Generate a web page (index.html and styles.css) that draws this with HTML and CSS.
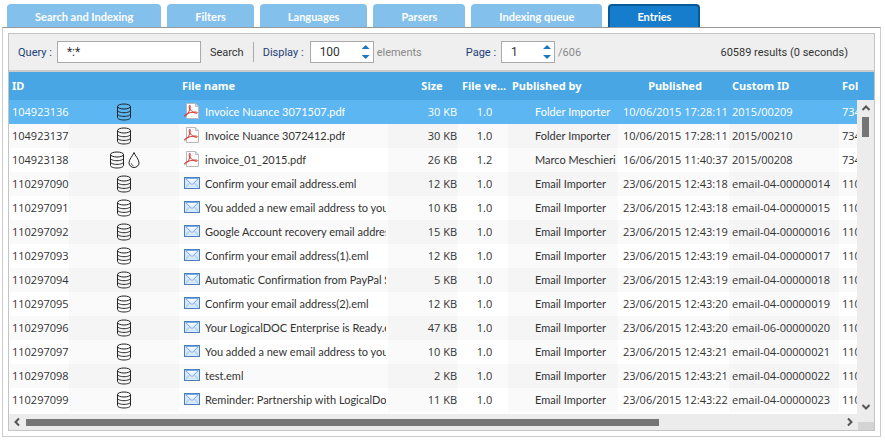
FILE: index.html
```
<!DOCTYPE html>
<html lang="en">
<head>
  <meta charset="UTF-8" />
  <title>Entries</title>
  <meta name="viewport" content="width=device-width, initial-scale=1.0" />
  <link rel="stylesheet" href="styles.css">
</head>
<body>

  <!-- shared icons -->
  <svg class="sprite" width="0" height="0" aria-hidden="true">
    <symbol id="db" viewBox="0 0 16 18">
      <path d="M1.500 3.500v11c0 1.400 2.800 2.500 6.500 2.500s6.500-1.100 6.500-2.500v-11" fill="none" stroke="currentColor" />
      <ellipse cx="8" cy="3.500" rx="6.500" ry="2.500" fill="none" stroke="currentColor" />
      <path d="M1.500 7.200c0 1.400 2.800 2.500 6.500 2.500s6.500-1.100 6.500-2.500M1.500 10.900c0 1.400 2.800 2.500 6.500 2.500s6.500-1.100 6.500-2.500" fill="none" stroke="currentColor" />
    </symbol>
    <symbol id="drop" viewBox="0 0 12 18">
      <path d="M6 1.500C4.700 5 1 8.300 1 11.800a5 4.700 0 0 0 10 0C11 8.300 7.300 5 6 1.500z" fill="none" stroke="currentColor" />
      <path d="M3.200 12.200c.2 1.300 1 2.200 2.200 2.500" fill="none" stroke="currentColor" stroke-width=".8" />
    </symbol>
    <symbol id="pdf" viewBox="0 0 16 16">
      <path d="M2.500.5h9l3 3v12h-12z" fill="#fdfdfd" stroke="#b9b9b9" />
      <path d="M11.500.5v3h3" fill="#e4e4e4" stroke="#b9b9b9" />
      <path d="M.8 13.200c1.600-.3 5.200-4.700 5.500-9.900.1-1.200-1.300-1.200-1.200.1.300 3.600 3.800 6.500 7.400 6.900 1.100.1 1.200-1 .1-1.200-3.200-.5-8.700.8-11.300 2.600-1 .7-1.300 1.600-.5 1.500z" fill="none" stroke="#d6322c" />
    </symbol>
    <symbol id="mail" viewBox="0 0 16 12">
      <rect x=".5" y=".5" width="15" height="11" fill="#d5e8fb" stroke="#4a80bd" />
      <path d="M1.500 10.500l4.500-5M14.500 10.500l-4.500-5" stroke="#9dc3ea" />
      <path d="M1.500 1.500L8 7.500l6.500-6z" fill="#eef6ff" stroke="#7eaadb" />
    </symbol>
    <symbol id="chevron" viewBox="0 0 10 10">
      <path d="M1.500 7L5 3.500 8.500 7" fill="none" stroke="#555" stroke-width="2" />
    </symbol>
  </svg>

  <nav class="tabs">
    <button class="tab">Search and Indexing</button>
    <button class="tab">Filters</button>
    <button class="tab">Languages</button>
    <button class="tab">Parsers</button>
    <button class="tab">Indexing queue</button>
    <button class="tab active">Entries</button>
  </nav>

  <main class="panel">
    <div class="entries">
      <form class="toolbar">
        <label for="query">Query :</label>
        <input id="query" class="query" type="text" value="*:*">
        <button type="button" class="search">Search</button>
        <label for="display">Display :</label>
        <span class="spinner">
          <input id="display" type="text" value="100">
          <span class="arrows">
            <button type="button" class="up" aria-label="More elements"></button>
            <button type="button" class="down" aria-label="Fewer elements"></button>
          </span>
        </span>
        <span class="unit">elements</span>
        <label for="page" class="page-label">Page :</label>
        <span class="spinner page">
          <input id="page" type="text" value="1">
          <span class="arrows">
            <button type="button" class="up" aria-label="Next page"></button>
            <button type="button" class="down" aria-label="Previous page"></button>
          </span>
        </span>
        <span class="unit">/606</span>
        <span class="results">60589 results (0 seconds)</span>
      </form>

      <div class="grid">
        <table>
          <colgroup>
            <col class="c-id"><col class="c-icons"><col class="c-name"><col class="c-size"><col class="c-ver">
            <col class="c-by"><col class="c-date"><col class="c-custom"><col class="c-folder">
          </colgroup>
          <thead>
            <tr>
              <th>ID</th>
              <th></th>
              <th>File name</th>
              <th class="size">Size</th>
              <th class="ver">File ve...</th>
              <th class="by">Published by</th>
              <th class="date">Published</th>
              <th>Custom ID</th>
              <th><div class="cut">Fol</div></th>
            </tr>
          </thead>
          <tbody id="rows"></tbody>
        </table>
        <div class="vscroll">
          <svg class="arrow"><use href="#chevron" /></svg>
          <div class="thumb"></div>
          <svg class="arrow flip"><use href="#chevron" /></svg>
        </div>
      </div>

      <div class="hscroll">
        <svg class="arrow left"><use href="#chevron" /></svg>
        <div class="track"><div class="thumb"></div></div>
        <svg class="arrow right"><use href="#chevron" /></svg>
        <div class="corner"></div>
      </div>
    </div>
  </main>

  <script>
    // id, file name, size, version, published by, published, custom id, folder
    const entries = [
      ['104923136', 'Invoice Nuance 3071507.pdf', '30 KB', '1.0', 'Folder Importer', '10/06/2015 17:28:11', '2015/00209', '734'],
      ['104923137', 'Invoice Nuance 3072412.pdf', '30 KB', '1.0', 'Folder Importer', '10/06/2015 17:28:11', '2015/00210', '734'],
      ['104923138', 'invoice_01_2015.pdf', '26 KB', '1.2', 'Marco Meschieri', '16/06/2015 11:40:37', '2015/00208', '734'],
      ['110297090', 'Confirm your email address.eml', '12 KB', '1.0', 'Email Importer', '23/06/2015 12:43:18', 'email-04-00000014', '110'],
      ['110297091', 'You added a new email address to your', '10 KB', '1.0', 'Email Importer', '23/06/2015 12:43:18', 'email-04-00000015', '110'],
      ['110297092', 'Google Account recovery email address', '15 KB', '1.0', 'Email Importer', '23/06/2015 12:43:19', 'email-04-00000016', '110'],
      ['110297093', 'Confirm your email address(1).eml', '12 KB', '1.0', 'Email Importer', '23/06/2015 12:43:19', 'email-04-00000017', '110'],
      ['110297094', 'Automatic Confirmation from PayPal S', '5 KB', '1.0', 'Email Importer', '23/06/2015 12:43:19', 'email-04-00000018', '110'],
      ['110297095', 'Confirm your email address(2).eml', '12 KB', '1.0', 'Email Importer', '23/06/2015 12:43:20', 'email-04-00000019', '110'],
      ['110297096', 'Your LogicalDOC Enterprise is Ready.eml', '47 KB', '1.0', 'Email Importer', '23/06/2015 12:43:20', 'email-06-00000020', '110'],
      ['110297097', 'You added a new email address to your', '10 KB', '1.0', 'Email Importer', '23/06/2015 12:43:21', 'email-04-00000021', '110'],
      ['110297098', 'test.eml', '2 KB', '1.0', 'Email Importer', '23/06/2015 12:43:21', 'email-04-00000022', '110'],
      ['110297099', 'Reminder: Partnership with LogicalDoc', '11 KB', '1.0', 'Email Importer', '23/06/2015 12:43:22', 'email-04-00000023', '110']
    ];

    const rows = document.getElementById('rows');

    entries.forEach(([id, name, size, version, by, date, custom, folder], index) => {
      const type = name.endsWith('.pdf') ? 'pdf' : 'mail';
      const drop = id === '104923138' ? '<svg class="drop"><use href="#drop" /></svg>' : '';
      const tr = document.createElement('tr');
      if (index === 0) tr.className = 'selected';
      tr.innerHTML = `
        <td>${id}</td>
        <td class="state"><div class="icons"><svg class="db"><use href="#db" /></svg>${drop}</div></td>
        <td><div class="file"><svg class="${type}"><use href="#${type}" /></svg><span>${name}</span></div></td>
        <td class="right">${size}</td>
        <td class="center">${version}</td>
        <td class="by">${by}</td>
        <td class="date">${date}</td>
        <td>${custom}</td>
        <td><div class="cut">${folder}</div></td>`;
      rows.appendChild(tr);
    });
  </script>

</body>
</html>
```
FILE: styles.css
```
* {
  box-sizing: border-box;
}

body {
  margin: 0;
  padding: 4px 4px 5px 2px;
  background: #fff;
  font-family: "Open Sans", sans-serif;
  font-size: 11px;
  font-variant-ligatures: none;
  color: #333;
}

button,
input {
  font: inherit;
  margin: 0;
  padding: 0;
  border: 0;
  background: none;
}

.sprite {
  position: absolute;
}

/* tabs */
.tabs {
  display: flex;
  gap: 6px;
  padding-left: 5px;
}

.tab {
  height: 23px;
  padding: 2px 28px 0;
  border-radius: 4px 4px 0 0;
  background: #83c0ec;
  color: #fff;
  font-family: Lato, sans-serif;
  font-size: 11px;
  font-weight: bold;
  white-space: nowrap;
}

.tab.active {
  padding: 0 27px;
  border: 2px solid #075a98;
  border-bottom: 0;
  background: #167dcd;
}

.panel {
  padding: 5px;
  border: 1px solid #ccc;
  border-top-color: #999;
}

.entries {
  border: 1px solid #c4c4c4;
}

/* toolbar */
.toolbar {
  display: flex;
  align-items: center;
  height: 38px;
  padding: 0 26px 0 9px;
  border-bottom: 2px solid #ccc;
  background: #efefef;
  font-family: Roboto, sans-serif;
  font-size: 11px;
  white-space: nowrap;
}

.toolbar label {
  color: #1c4076;
}

.toolbar input {
  height: 22px;
  color: #333;
}

.toolbar .query {
  width: 144px;
  margin-left: 5px;
  padding: 0 9px;
  font-size: 12px;
}

.query,
.spinner {
  border: 1px solid #aaa;
  background: #fff;
}

.search {
  height: 20px;
  margin-right: 9px;
  padding: 0 9px;
  border-right: 1px solid #aaa;
  color: #333;
}

.spinner {
  display: flex;
  width: 64px;
  height: 22px;
  margin: 0 3px 0 6px;
}

.spinner input {
  flex: 1;
  min-width: 0;
  height: 20px;
  padding-left: 9px;
  font-size: 12px;
}

.spinner.page {
  width: 54px;
  margin-left: 5px;
}

.arrows {
  display: flex;
  flex-direction: column;
  justify-content: center;
  gap: 6px;
  padding-right: 3px;
}

.up,
.down {
  width: 8px;
  height: 4px;
  background: #1978c0;
  clip-path: polygon(50% 0, 100% 100%, 0 100%);
}

.down {
  clip-path: polygon(0 0, 100% 0, 50% 100%);
}

.unit {
  color: #888;
}

.page-label {
  margin-left: 44px;
}

.results {
  margin-left: auto;
  color: #333;
}

/* list */
.grid {
  position: relative;
  padding-bottom: 2px;
}

table {
  width: 100%;
  table-layout: fixed;
  border-collapse: collapse;
}

.c-id { width: 60px; }
.c-icons { width: 110px; }
.c-name { width: 209px; }
.c-size { width: 70px; }
.c-ver { width: 50px; }
.c-by { width: 110px; }
.c-date { width: 111px; }
.c-custom { width: 110px; }

th,
td {
  height: 24px;
  padding: 0 0 2px 3px;
  overflow: hidden;
  text-align: left;
  white-space: nowrap;
}

th {
  height: 28px;
  background: #47a6e3;
  color: #fff;
  font-family: "Noto Sans", sans-serif;
}

tbody tr:nth-child(even) {
  background: #fafafa;
}

tbody td:nth-child(even) {
  background: #00000005;
}

tbody .selected {
  background: #5cb6f2;
  color: #fff;
}

.selected td:nth-child(even) {
  background: none;
}

.center {
  text-align: center;
}

th.size {
  padding-left: 18px;
  text-align: center;
}

th.ver {
  padding-left: 4px;
}

th.by {
  padding-left: 4px;
}

th.date {
  text-align: center;
}

.right {
  padding-right: 1px;
  text-align: right;
}

td.by {
  padding-left: 27px;
}

td.date {
  padding-left: 5px;
}

td.by,
.file {
  font-family: Lato, sans-serif;
}

.cut {
  width: 16px;
  overflow: hidden;
}

td.state {
  padding-bottom: 0;
}

.icons {
  display: flex;
  justify-content: center;
  gap: 3px;
  padding-right: 3px;
  color: #222;
}

.file {
  display: flex;
  align-items: center;
  gap: 5px;
  padding: 0 2px;
}

.file span {
  overflow: hidden;
}

.file svg {
  flex: none;
  width: 16px;
  height: 16px;
}

.file .mail {
  height: 12px;
}

.icons .db {
  width: 16px;
  height: 18px;
}

.icons .drop {
  width: 12px;
  height: 18px;
}

/* scrollbars */
.arrow {
  flex: none;
  width: 10px;
  height: 10px;
}

.vscroll {
  position: absolute;
  top: 28px;
  right: 0;
  bottom: 0;
  display: flex;
  flex-direction: column;
  align-items: center;
  width: 17px;
  padding: 3px 0 2px;
  background: #ececec;
}

.vscroll .thumb {
  width: 7px;
  height: 20px;
  margin: 4px 0 auto;
  background: #757575;
}

.hscroll {
  display: flex;
  align-items: center;
  height: 16px;
  padding-left: 3px;
  background: #ececec;
}

.track {
  flex: 1;
  padding: 0 18px 0 4px;
}

.track .thumb {
  width: 79%;
  height: 7px;
  background: #757575;
}

.flip {
  transform: rotate(180deg);
}

.left {
  transform: rotate(-90deg);
}

.right.arrow {
  padding: 0;
  transform: rotate(90deg);
}

.corner {
  align-self: flex-end;
  width: 16px;
  height: 8px;
  margin-left: 3px;
  background: #d4d4d4;
}
```
